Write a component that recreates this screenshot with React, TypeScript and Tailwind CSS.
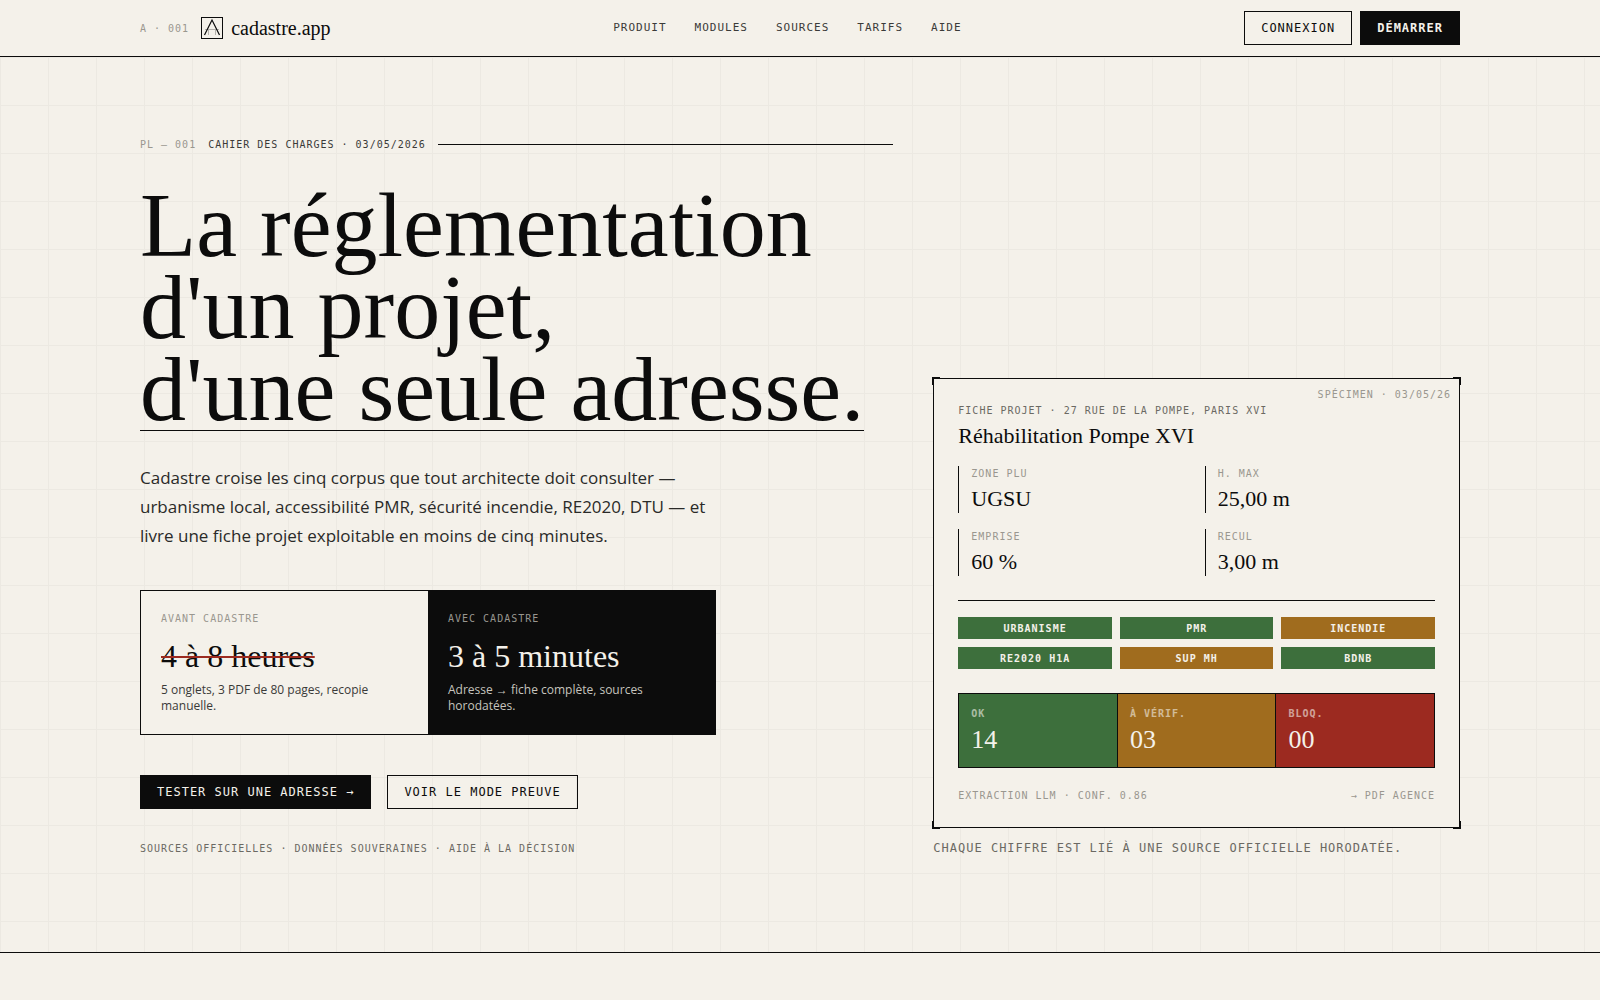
import React from 'react';

const mono = "font-['DejaVu_Sans_Mono',monospace]";
const serif = "font-['Liberation_Serif',serif]";
const micro = `${mono} text-[10px] leading-[15px] tracking-[1px] uppercase`;
const button = `${mono} inline-flex h-[34px] items-center border border-[#0c0c0c] px-4 text-xs tracking-[1px] uppercase whitespace-nowrap`;
const buttonDark = 'bg-[#0c0c0c] text-[#f4f1ea]';
const buttonLight = 'bg-transparent text-[#0c0c0c]';

const navItems = ['Produit', 'Modules', 'Sources', 'Tarifs', 'Aide'];

const facts = [
  { label: 'Zone PLU', value: 'UGSU' },
  { label: 'H. max', value: '25,00 m' },
  { label: 'Emprise', value: '60 %' },
  { label: 'Recul', value: '3,00 m' },
];

const chips = [
  { label: 'Urbanisme', color: 'bg-[#3d6f3c]' },
  { label: 'PMR', color: 'bg-[#3d6f3c]' },
  { label: 'Incendie', color: 'bg-[#a06c1e]' },
  { label: 'RE2020 H1a', color: 'bg-[#3d6f3c]' },
  { label: 'SUP MH', color: 'bg-[#a06c1e]' },
  { label: 'BDNB', color: 'bg-[#3d6f3c]' },
];

const stats = [
  { label: 'OK', value: '14', color: 'bg-[#3d6f3c]' },
  { label: 'À vérif.', value: '03', color: 'bg-[#a06c1e]' },
  { label: 'Bloq.', value: '00', color: 'bg-[#9c2a20]' },
];

const corners = [
  '-top-[2px] -left-[2px] border-t-2 border-l-2',
  '-top-[2px] -right-[2px] border-t-2 border-r-2',
  '-bottom-[2px] -left-[2px] border-b-2 border-l-2',
  '-bottom-[2px] -right-[2px] border-b-2 border-r-2',
];

function Logo() {
  return (
    <svg width="22" height="22" viewBox="0 0 22 22" fill="none" stroke="#0c0c0c" aria-hidden="true">
      <rect x="0.5" y="0.5" width="21" height="21" />
      <path d="M3.5 18 L11 3 L18.5 18" strokeWidth="1.2" />
      <path d="M4 12.5 H18 M7.5 13 V18 M14.5 13 V18" strokeWidth="0.8" opacity="0.35" />
    </svg>
  );
}

function Header() {
  return (
    <header className="border-b border-[#0c0c0c]">
      <div className="mx-auto flex h-14 max-w-[1320px] items-center justify-between">
        <a href="#" className="flex items-center">
          <span className={`${micro} mr-3 text-[#9a978f]`}>A · 001</span>
          <Logo />
          <span className={`${serif} ml-2 text-[20px] leading-6`}>cadastre.app</span>
        </a>
        <nav className="flex gap-7">
          {navItems.map((item) => (
            <a key={item} href="#" className={`${mono} text-[11px] leading-4 tracking-[1px] text-[#3a3a38] uppercase`}>
              {item}
            </a>
          ))}
        </nav>
        <div className="flex gap-2">
          <button className={`${button} ${buttonLight}`}>Connexion</button>
          <button className={`${button} ${buttonDark} font-bold`}>Démarrer</button>
        </div>
      </div>
    </header>
  );
}

function Comparison() {
  return (
    <div className="mt-10 grid max-w-xl grid-cols-2 border border-[#0c0c0c]">
      <div className="bg-[#f4f1ea] p-5">
        <div className={`${micro} text-[#9a978f]`}>Avant Cadastre</div>
        <div className={`${serif} mt-3 text-[32px] leading-9 line-through decoration-[#9c2a20] decoration-2`}>4 à 8 heures</div>
        <p className="mt-2 text-xs leading-4 text-[#3a3a38]">5 onglets, 3 PDF de 80 pages, recopie manuelle.</p>
      </div>
      <div className="bg-[#0c0c0c] p-5 text-[#f4f1ea]">
        <div className={`${micro} text-[#989690]`}>Avec Cadastre</div>
        <div className={`${serif} mt-3 text-[32px] leading-9`}>3 à 5 minutes</div>
        <p className="mt-2 text-xs leading-4 text-[#c6c4be]">Adresse → fiche complète, sources horodatées.</p>
      </div>
    </div>
  );
}

function ProjectCard() {
  return (
    <div className="relative border border-[#0c0c0c] bg-[#f4f1ea] p-6">
      {corners.map((corner) => (
        <span key={corner} className={`absolute size-2 border-[#0c0c0c] ${corner}`} />
      ))}
      <span className={`${micro} absolute top-2 right-2 text-[#9a978f]`}>Spécimen · 03/05/26</span>

      <div className={`${micro} text-[#6b6963]`}>Fiche projet · 27 rue de la Pompe, Paris XVI</div>
      <h2 className={`${serif} mt-1 text-[22px] leading-7`}>Réhabilitation Pompe XVI</h2>

      <dl className="mt-4 grid grid-cols-2 gap-4 border-b border-[#0c0c0c] pb-6">
        {facts.map((fact) => (
          <div key={fact.label} className="border-l border-[#0c0c0c] pl-3">
            <dt className={`${micro} text-[#9a978f]`}>{fact.label}</dt>
            <dd className={`${serif} mt-1 text-[22px] leading-7`}>{fact.value}</dd>
          </div>
        ))}
      </dl>

      <div className="mt-4 grid grid-cols-3 gap-2">
        {chips.map((chip) => (
          <span key={chip.label} className={`${micro} flex h-[22px] items-center justify-center font-bold text-[#f4f1ea] ${chip.color}`}>
            {chip.label}
          </span>
        ))}
      </div>

      <div className="mt-6 grid grid-cols-3 gap-px border border-[#0c0c0c] bg-[#0c0c0c] text-[#f4f1ea]">
        {stats.map((stat) => (
          <div key={stat.label} className={`p-3 ${stat.color}`}>
            <div className={`${micro} font-bold opacity-60`}>{stat.label}</div>
            <div className={`${serif} mt-1 text-[26px] leading-[30px]`}>{stat.value}</div>
          </div>
        ))}
      </div>

      <div className={`${micro} mt-5 flex justify-between text-[#9a978f]`}>
        <span>Extraction LLM · Conf. 0.86</span>
        <span>→ PDF agence</span>
      </div>
    </div>
  );
}

function Hero() {
  return (
    <section className="border-b border-[#0c0c0c] bg-[linear-gradient(to_right,#ece9e2_1px,transparent_1px),linear-gradient(to_bottom,#ece9e2_1px,transparent_1px)] bg-[size:48px_48px]">
      <div className="mx-auto grid max-w-[1320px] grid-cols-12 items-end gap-10 pt-20 pb-24">
        <div className="col-span-7">
          <div className={`${micro} flex items-center gap-3`}>
            <span className="text-[#9a978f]">PL — 001</span>
            <span className="text-[#3a3a38]">Cahier des charges · 03/05/2026</span>
            <span className="h-px flex-1 bg-[#0c0c0c]" />
          </div>
          <h1 className={`${serif} mt-8 text-[92px] leading-[82px] whitespace-nowrap`}>
            La réglementation
            <br />
            d'un projet,
            <br />
            <span className="inline-block border-b border-[#0c0c0c]">d'une seule adresse.</span>
          </h1>
          <p className="mt-8 max-w-xl text-[17px] leading-[29px] text-[#2a2a28]">
            Cadastre croise les cinq corpus que tout architecte doit consulter — urbanisme local, accessibilité PMR,
            sécurité incendie, RE2020, DTU — et livre une fiche projet exploitable en moins de cinq minutes.
          </p>
          <Comparison />
          <div className="mt-10 flex gap-4">
            <button className={`${button} ${buttonDark}`}>Tester sur une adresse →</button>
            <button className={`${button} ${buttonLight}`}>Voir le mode preuve</button>
          </div>
          <p className={`${micro} mt-8 text-[#6b6963]`}>Sources officielles · Données souveraines · Aide à la décision</p>
        </div>
        <div className="col-span-5">
          <ProjectCard />
          <p className={`${mono} mt-3 text-xs leading-4 tracking-[1px] text-[#6b6963] uppercase`}>
            Chaque chiffre est lié à une source officielle horodatée.
          </p>
        </div>
      </div>
    </section>
  );
}

export default function App() {
  return (
    <div className="min-h-screen bg-[#f4f1ea] font-['Open_Sans',sans-serif] text-[#0c0c0c]">
      <Header />
      <main>
        <Hero />
      </main>
    </div>
  );
}
